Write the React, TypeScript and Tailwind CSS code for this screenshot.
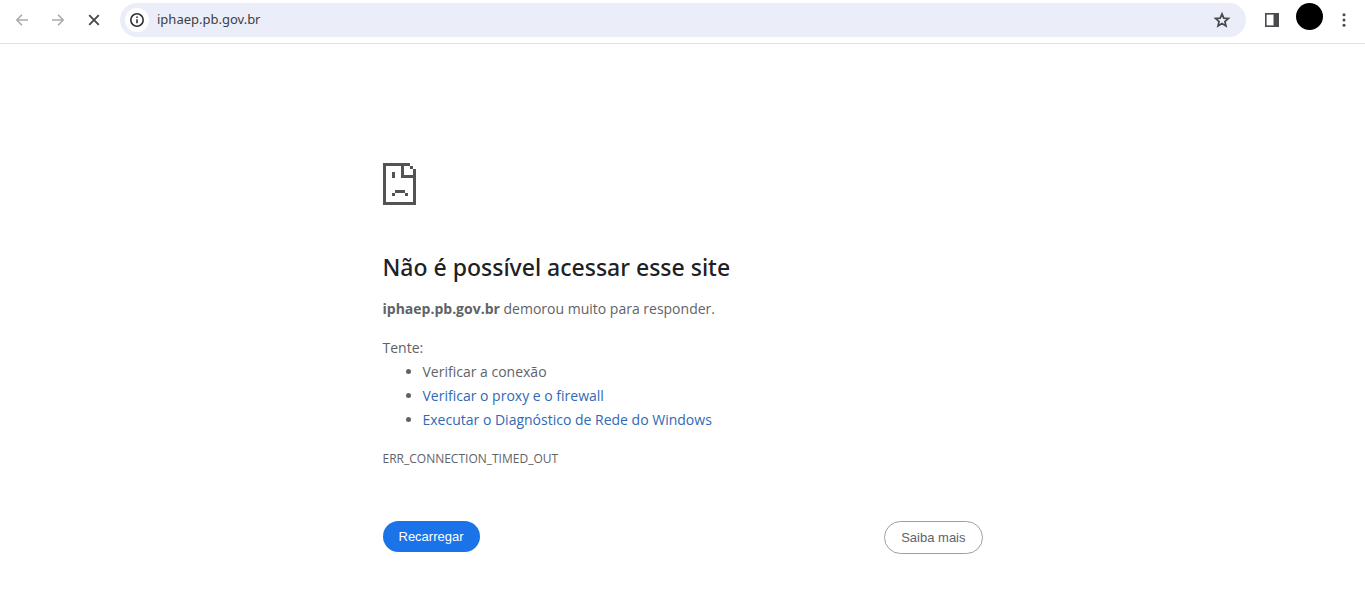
import type { ReactNode } from 'react';

const HOST = 'iphaep.pb.gov.br';

interface ToolbarButtonProps {
  label: string;
  className?: string;
  disabled?: boolean;
  children: ReactNode;
}

function ToolbarButton({ label, className = '', disabled, children }: ToolbarButtonProps) {
  return (
    <button
      type="button"
      aria-label={label}
      disabled={disabled}
      className={`flex h-7 w-7 shrink-0 items-center justify-center rounded-full ${className}`}
    >
      {children}
    </button>
  );
}

function ArrowIcon({ flipped }: { flipped?: boolean }) {
  return (
    <svg viewBox="0 0 16 16" className="h-4 w-4" fill="none" stroke="currentColor" strokeWidth="1.6">
      {flipped ? <path d="M2 8h11M8 2.8 13.2 8 8 13.2" /> : <path d="M14 8H3M8 2.8 2.8 8 8 13.2" />}
    </svg>
  );
}

function Toolbar() {
  return (
    <header className="flex h-11 items-center border-b border-[#dfe1e3] bg-white pr-[7px] pb-1 pl-2">
      <nav className="flex gap-2" aria-label="Navegação">
        <ToolbarButton label="Voltar" className="text-[#a9abad]" disabled>
          <ArrowIcon />
        </ToolbarButton>
        <ToolbarButton label="Avançar" className="text-[#a9abad]" disabled>
          <ArrowIcon flipped />
        </ToolbarButton>
        <ToolbarButton label="Parar" className="text-[#47494c]">
          <svg viewBox="0 0 16 16" className="h-4 w-4" fill="none" stroke="currentColor" strokeWidth="1.9">
            <path d="M3.2 3.2l9.6 9.6M12.8 3.2l-9.6 9.6" />
          </svg>
        </ToolbarButton>
      </nav>

      <div className="ml-3 flex h-[34px] min-w-0 flex-1 items-center rounded-full bg-[#ebeef8] px-[5px]">
        <button
          type="button"
          aria-label="Ver informações do site"
          className="flex h-6 w-6 shrink-0 items-center justify-center rounded-full bg-white text-[#303134]"
        >
          <svg viewBox="0 0 16 16" className="h-4 w-4" fill="none" stroke="currentColor" strokeWidth="1.6">
            <circle cx="8" cy="8" r="6.2" />
            <path d="M8 7.2v4M8 4.4v1.7" />
          </svg>
        </button>
        <input
          type="text"
          aria-label="Barra de endereço"
          defaultValue={HOST}
          className="ml-2 min-w-0 flex-1 bg-transparent text-[13px] text-[#3c4043] outline-none"
        />
        <button
          type="button"
          aria-label="Adicionar aos favoritos"
          className="mr-[5px] flex h-7 w-7 shrink-0 items-center justify-center text-[#47494c]"
        >
          <svg viewBox="0 0 18 18" className="h-[18px] w-[18px]" fill="none" stroke="currentColor" strokeWidth="1.7">
            <path d="M9 2.9l1.8 4.2 4.6.4-3.5 3 1.1 4.5L9 12.6 5 15l1.1-4.5-3.5-3 4.6-.4z" />
          </svg>
        </button>
      </div>

      <div className="ml-3 flex items-center">
        <ToolbarButton label="Painel lateral" className="text-[#47494c]">
          <svg viewBox="0 0 16 16" className="h-4 w-4">
            <rect x="1.8" y="1.8" width="12.4" height="12.4" fill="none" stroke="currentColor" strokeWidth="1.6" />
            <path d="M9.5 2h5v12h-5z" fill="currentColor" />
          </svg>
        </ToolbarButton>
        <button type="button" aria-label="Perfil" className="mr-[7px] mb-1.5 ml-2.5 h-[27px] w-[27px] rounded-full bg-black" />
        <ToolbarButton label="Mais opções" className="text-[#47494c]">
          <svg viewBox="0 0 16 16" className="h-4 w-4" fill="currentColor">
            <circle cx="8" cy="2.8" r="1.5" />
            <circle cx="8" cy="8" r="1.5" />
            <circle cx="8" cy="13.2" r="1.5" />
          </svg>
        </ToolbarButton>
      </div>
    </header>
  );
}

/** Pixel-art sad page, drawn on an 11x14 grid. */
function SadPageIcon() {
  return (
    <svg viewBox="0 0 11 14" className="h-[42px] w-[33px]" fill="#535353" shapeRendering="crispEdges" aria-hidden="true">
      <path d="M0 0h9v1H7v3h3V2h1v11h0v1H0zM1 1v12h9V5H6V1z" fillRule="evenodd" />
      <path d="M9 1h1v1H9zM3 3h1v2H3zM4 9h3.3v1H4zM3 10h1v1H3zM7.3 10h1v1h-1z" />
    </svg>
  );
}

export default function App() {
  return (
    <div className="min-h-screen bg-white font-['Noto_Sans','Open_Sans',sans-serif]">
      <Toolbar />
      <main className="mx-auto max-w-[600px] pt-[119px] font-['Open_Sans','Noto_Sans',sans-serif] text-[14px] leading-6 text-[#5f6368]">
        <SadPageIcon />
        <h1 className="mt-12 font-['Noto_Sans','Open_Sans',sans-serif] text-[23px] leading-7 font-medium text-[#202124]">
          Não é possível acessar esse site
        </h1>
        <p className="mt-4">
          <strong className="font-bold">{HOST}</strong> demorou muito para responder.
        </p>
        <p className="mt-[15px]">Tente:</p>
        <ul className="list-disc pl-10">
          <li>Verificar a conexão</li>
          <li>
            <a href="#firewall" className="text-[#3069b5]">Verificar o proxy e o firewall</a>
          </li>
          <li>
            <a href="#diagnostico" className="text-[#3069b5]">Executar o Diagnóstico de Rede do Windows</a>
          </li>
        </ul>
        <p className="mt-[15px] text-[12px]">ERR_CONNECTION_TIMED_OUT</p>
        <div className="mt-[50px] flex items-start justify-between font-['Liberation_Sans',Arial,sans-serif] text-[13px] leading-4">
          <button type="button" className="h-[31px] rounded-full bg-[#1a73e8] px-4 text-white">
            Recarregar
          </button>
          <button type="button" className="h-[33px] rounded-full border border-[#9aa0a6] px-4 text-[#5f6368]">
            Saiba mais
          </button>
        </div>
      </main>
    </div>
  );
}
